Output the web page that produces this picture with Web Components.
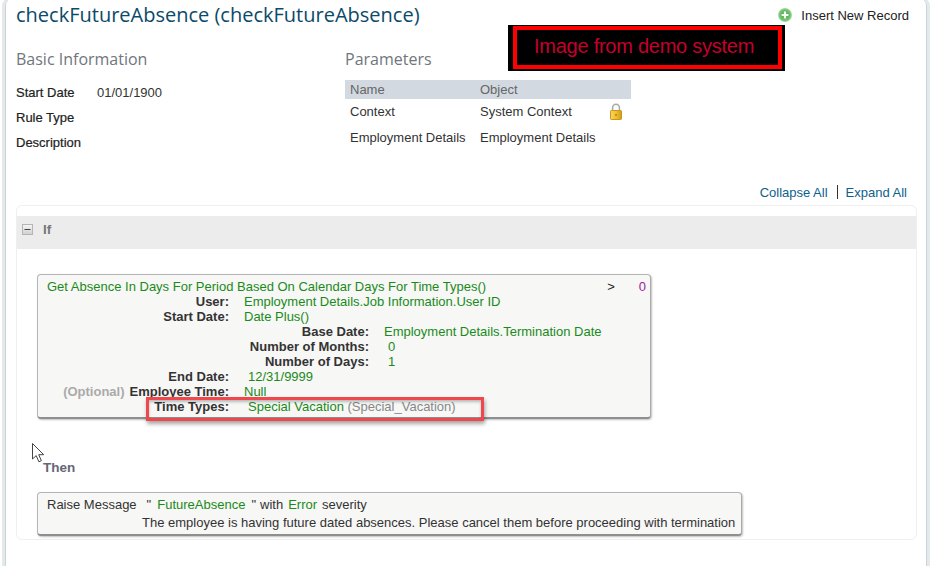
<!DOCTYPE html>
<html><head><meta charset="utf-8"><style>
html,body{margin:0;padding:0;background:#fff;height:566px;overflow:hidden}
body{font-family:"Liberation Sans",Arial,sans-serif;font-size:13px}
</style></head><body>
<rule-page></rule-page>
<script>
function def(name,html){customElements.define(name,class extends HTMLElement{constructor(){super();this.attachShadow({mode:'open'}).innerHTML=html;}});}
def('info-row',`<style>:host{display:flex;height:25px;align-items:center;font-size:13px;color:#222}
.l{width:81px;-webkit-text-stroke:.2px #222}.v{color:#333}</style><span class="l"><slot name="label"></slot></span><span class="v"><slot></slot></span>`);
def('param-table',`<style>:host{display:block;width:286px;font-size:13px;color:#333}
.h{display:grid;grid-template-columns:130px 1fr;background:#d2d9e0;height:19px;line-height:19px;padding-left:5px;color:#666}
.r{display:grid;grid-template-columns:130px 130px 1fr;padding-left:5px;height:26px;line-height:26px}
svg{display:block;margin-top:4px}
</style><div class="h"><span>Name</span><span>Object</span></div>
<div class="r"><span>Context</span><span>System Context</span><svg width="12" height="17" viewBox="0 0 12 17"><defs><linearGradient id="lk" x1="0" y1="0" x2="1" y2="0"><stop offset="0" stop-color="#f7d75a"/><stop offset=".55" stop-color="#eebd2c"/><stop offset="1" stop-color="#d39a14"/></linearGradient></defs><path d="M2.6 8V4.6a3.4 3.4 0 0 1 6.8 0V8" fill="none" stroke="#a8a8a8" stroke-width="1.5"/><rect x=".5" y="7.5" width="11" height="9" rx=".8" fill="url(#lk)" stroke="#c8971c"/><rect x="5.5" y="11" width="1" height="2" fill="#8a6508"/></svg></div>
<div class="r"><span>Employment Details</span><span>Employment Details</span></div>`);
def('expr-line',`<style>:host{display:flex;height:15px;line-height:15px;white-space:nowrap}
.l{font-weight:700;color:#333;text-align:right;flex:none;width:var(--lw,182px)}
.v{color:#1a8a1a;margin-left:var(--gap,15px)}</style><span class="l"><slot name="label"></slot></span><span class="v"><slot></slot></span>`);
def('expr-box',`<style>:host{display:block;box-sizing:border-box;background:#f7f7f6;border:1px solid #b5b5b5;border-right-color:#aaa;border-bottom:2px solid #8f8f8f;border-radius:4px;box-shadow:1px 1px 2px rgba(0,0,0,.25);font-size:13px}</style><slot></slot>`);
def('rule-page',`<style>
:host{display:block;box-sizing:border-box;width:933px;height:566px;position:relative;overflow:hidden;background:#fff}
.panel{position:absolute;inset:-3px 6px -10px 5px;border-left:1px solid #ccd3d8;border-right:1px solid #ccd3d8;box-shadow:-3px 0 0 #e4e9ec,3px 0 0 #e4e9ec;border-radius:9px}
.main{position:relative;padding:0 9px 0 16px;display:flex;flex-direction:column}
.top{display:flex;justify-content:space-between;height:36px}
h1{margin:2px 0 0;font:400 20px/26px "Open Sans",sans-serif;color:#0b4a68}
.ins{display:flex;align-items:center;gap:9px;font-size:13px;color:#222;height:16px;margin:7px 15px 0 0}
.cols{display:flex}
.c1{width:329px}
h2{margin:11px 0 0;font:400 16px/24px "Open Sans",sans-serif;color:#70767c}
.c1 h2{margin-bottom:9px}
.c2 h2{margin-bottom:9px}
.links{display:flex;justify-content:flex-end;align-items:center;margin-top:29px;padding-right:17px;height:16px;font-size:13px;color:#0d5f8c}
.sep{width:1px;height:14px;background:#333;margin:0 8px 0 9px}
.card{box-sizing:border-box;height:335px;width:901px;margin-top:5px;border:1px solid #efefef;border-radius:6px;padding-top:10px}
.ifbar{box-sizing:border-box;height:33px;background:#ececec;display:flex;align-items:center;padding:0 0 6px 5px;gap:10px;color:#777;font-weight:700;font-size:13.5px}
.ifbar svg{display:block}
.b1{width:614px;height:145px;margin:25px 0 0 20px;box-sizing:border-box;padding:4px 0 0 9px}
.first{display:flex;color:#1a8a1a;height:15px;line-height:15px}
.first .op{margin-left:auto;color:#222}.first .n{color:#a020a0;margin:0 4px 0 24px}
.then{color:#667;font-weight:700;font-size:13.5px;margin:41px 0 0 26px;height:15px;line-height:15px}
.b2{width:705px;height:44px;margin:17px 0 0 20px;box-sizing:border-box;padding:3px 5px 0 9px;color:#333}
.b2 div{height:18px;line-height:18px;white-space:nowrap}
.b2 .m{display:flex}
.g{color:#1a8a1a}.gr{color:#888}
.o{color:#aaa;font-weight:700;margin-right:5px}
.demo{position:absolute;left:508px;top:25px;width:277px;height:46px;box-sizing:border-box;background:#000;padding:1px 3px 2px 5px}
.demo div{height:100%;box-sizing:border-box;border:4px solid #f00;color:#c4002c;font-size:20px;line-height:32px;padding-left:17px;letter-spacing:-.25px;white-space:nowrap}
.hl{position:absolute;left:146px;top:397px;width:338px;height:24px;box-sizing:border-box;border:3px solid #f0474d;box-shadow:1px 3px 4px rgba(0,0,0,.35),inset 0 2px 3px rgba(0,0,0,.25)}
.cur{position:absolute;left:32px;top:443px}
</style>
<div class="panel"></div>
<div class="main">
<div class="top"><h1>checkFutureAbsence (checkFutureAbsence)</h1>
<div class="ins"><svg width="14" height="14" viewBox="0 0 14 14"><defs><radialGradient id="pl"><stop offset="0" stop-color="#3fa83f"/><stop offset=".7" stop-color="#6cc06a"/><stop offset="1" stop-color="#a9dba6"/></radialGradient></defs><circle cx="7" cy="7" r="7" fill="url(#pl)"/><path d="M7 3.6v6.8M3.6 7h6.8" stroke="#fff" stroke-width="2.2"/></svg><span>Insert New Record</span></div></div>
<div class="cols">
<div class="c1"><h2>Basic Information</h2>
<info-row><span slot="label">Start Date</span>01/01/1900</info-row>
<info-row><span slot="label">Rule Type</span></info-row>
<info-row><span slot="label">Description</span></info-row></div>
<div class="c2"><h2>Parameters</h2><param-table></param-table></div>
</div>
<div class="links"><span>Collapse All</span><span class="sep"></span><span>Expand All</span></div>
<div class="card">
<div class="ifbar"><svg width="11" height="11" viewBox="0 0 11 11"><defs><linearGradient id="mn" x1="0" y1="0" x2="0" y2="1"><stop offset="0" stop-color="#f6f6f6"/><stop offset="1" stop-color="#cfcfcf"/></linearGradient></defs><rect x=".5" y=".5" width="10" height="10" fill="url(#mn)" stroke="#b5b5b5"/><path d="M2.5 5.5h6" stroke="#444"/></svg><span>If</span></div>
<expr-box class="b1">
<div class="first"><span>Get Absence In Days For Period Based On Calendar Days For Time Types()</span><span class="op">&gt;</span><span class="n">0</span></div>
<expr-line><span slot="label">User:</span>Employment Details.Job Information.User ID</expr-line>
<expr-line><span slot="label">Start Date:</span>Date Plus()</expr-line>
<expr-line style="--lw:322px"><span slot="label">Base Date:</span>Employment Details.Termination Date</expr-line>
<expr-line style="--lw:322px;--gap:19px"><span slot="label">Number of Months:</span>0</expr-line>
<expr-line style="--lw:322px;--gap:19px"><span slot="label">Number of Days:</span>1</expr-line>
<expr-line style="--gap:19px"><span slot="label">End Date:</span>12/31/9999</expr-line>
<expr-line><span slot="label"><span class="o">(Optional)</span>Employee Time:</span>Null</expr-line>
<expr-line style="--gap:19px"><span slot="label">Time Types:</span>Special Vacation <span class="gr">(Special_Vacation)</span></expr-line>
</expr-box>
<div class="then">Then</div>
<expr-box class="b2">
<div class="m"><span>Raise Message</span><span style="margin-left:10px">"</span><span class="g" style="margin-left:6px">FutureAbsence</span><span style="margin-left:6px">"</span><span style="margin-left:4px">with</span><span class="g" style="margin-left:5px">Error</span><span style="margin-left:5px">severity</span></div>
<div style="padding-left:95px">The employee is having future dated absences. Please cancel them before proceeding with termination</div>
</expr-box>
</div>
</div>
<div class="demo"><div>Image from demo system</div></div>
<div class="hl"></div>
<svg class="cur" width="14" height="20" viewBox="0 0 14 20"><path d="M.5.5v15.5l3.7-3.4 2.7 6.2 2.5-1.1-2.7-6h5z" fill="#fff" stroke="#444"/></svg>`);
</script></body></html>
